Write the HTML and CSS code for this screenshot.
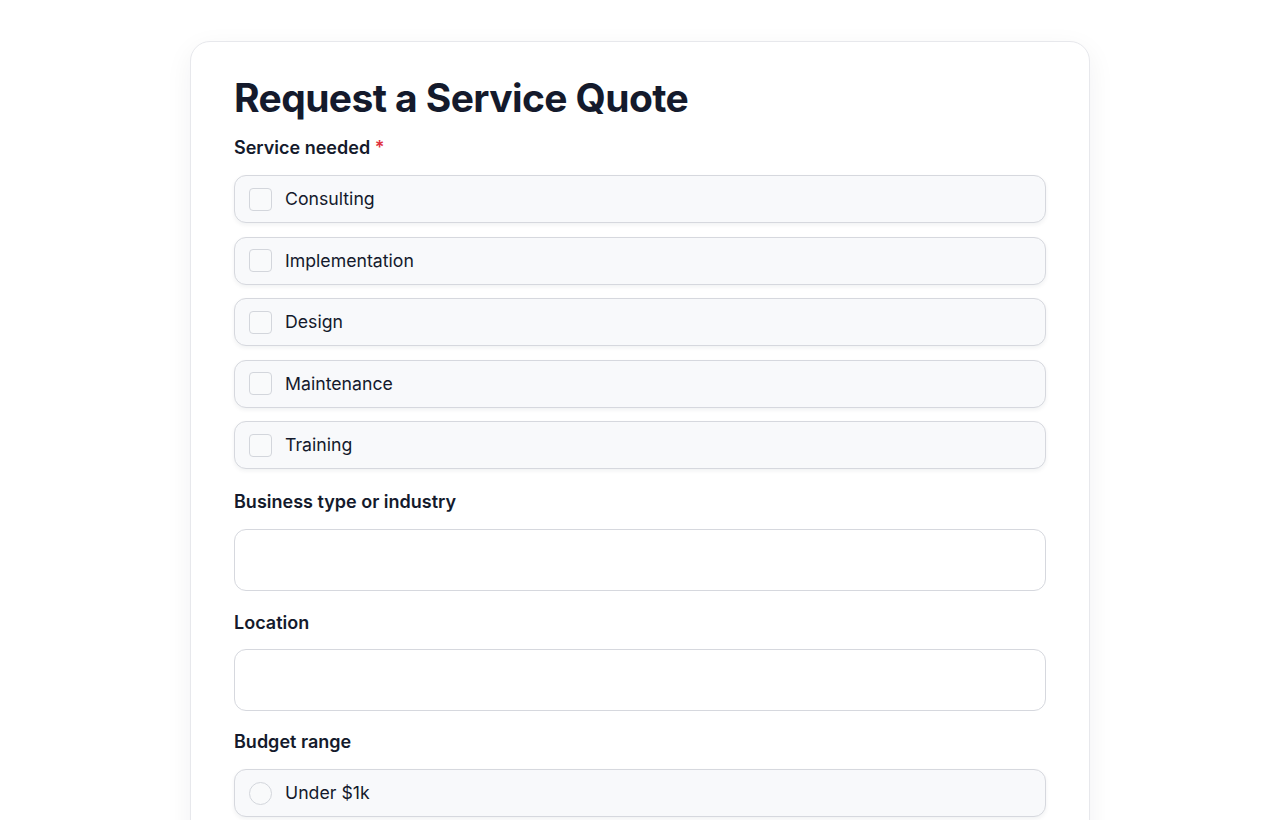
FILE: index.html
```html
<!DOCTYPE html>
<html>
<head>
<meta charset="utf-8">
<link rel="stylesheet" href="styles.css">
</head>
<body>
<div class="card">
  <h1 class="title">Request a Service Quote</h1>
  <div class="group group-first">
    <div class="label">Service needed <span class="req">*</span></div>
    <div class="options">
      <label class="opt"><span class="box"></span><span class="opt-text">Consulting</span></label>
      <label class="opt"><span class="box"></span><span class="opt-text">Implementation</span></label>
      <label class="opt"><span class="box"></span><span class="opt-text">Design</span></label>
      <label class="opt"><span class="box"></span><span class="opt-text">Maintenance</span></label>
      <label class="opt"><span class="box"></span><span class="opt-text">Training</span></label>
    </div>
  </div>
  <div class="group">
    <div class="label">Business type or industry</div>
    <div class="input"></div>
  </div>
  <div class="group group-location">
    <div class="label">Location</div>
    <div class="input"></div>
  </div>
  <div class="group">
    <div class="label">Budget range</div>
    <div class="options">
      <label class="opt"><span class="radio"></span><span class="opt-text">Under $1k</span></label>
      <label class="opt"><span class="radio"></span><span class="opt-text">$1k – $5k</span></label>
    </div>
  </div>
</div>
</body>
</html>
```
FILE: styles.css
```css
html, body {
  margin: 0;
  padding: 0;
  background: #ffffff;
}
body {
  font-family: Inter, "DejaVu Sans", sans-serif;
  color: #141a2c;
  padding-top: 41px;
}
.card {
  width: 812px;
  margin: 0 auto;
  padding: 32px 43px 40px;
  border: 1px solid #e7e8ec;
  border-radius: 20px;
  background: #fff;
  box-shadow: 0 8px 28px rgba(20, 26, 44, 0.06);
}
.title {
  margin: 0 0 14px;
  font-size: 39px;
  line-height: 48px;
  font-weight: 700;
  letter-spacing: -0.6px;
  color: #141a2c;
}
.group {
  margin-bottom: 20px;
}
.group-first {
  margin-bottom: 21px;
}
.group-location {
  margin-bottom: 19px;
}
.group-location .label {
  margin-bottom: 14px;
}
.label {
  font-size: 18px;
  line-height: 24px;
  font-weight: 600;
  margin-bottom: 15px;
}
.req {
  color: #e0313f;
}
.options {
  display: flex;
  flex-direction: column;
  gap: 13.5px;
}
.opt {
  display: flex;
  align-items: center;
  height: 46px;
  padding: 0 14px;
  border: 1px solid #d6d8de;
  border-radius: 12px;
  background: #f8f9fb;
  box-shadow: 0 2px 4px rgba(20, 26, 44, 0.06);
}
.box {
  width: 21px;
  height: 21px;
  border: 1px solid #d3d6dc;
  border-radius: 4px;
  background: #f9fafb;
  margin-right: 13px;
  flex: none;
}
.radio {
  width: 21px;
  height: 21px;
  border: 1px solid #d3d6dc;
  border-radius: 50%;
  background: #f9fafb;
  margin-right: 13px;
  flex: none;
}
.opt-text {
  font-size: 17.7px;
  line-height: 24px;
  color: #141a2c;
}
.input {
  height: 60px;
  border: 1px solid #d6d8de;
  border-radius: 12px;
  background: #fff;
}
```
